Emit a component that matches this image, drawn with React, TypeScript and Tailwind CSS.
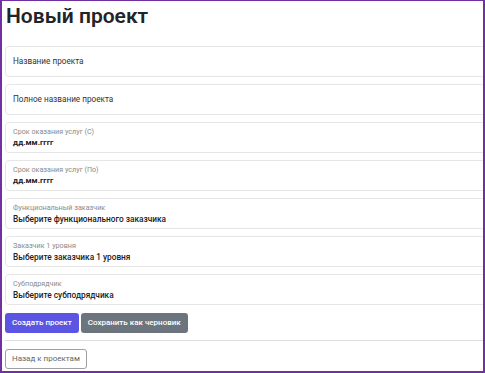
import React from "react";

type Field = {
  label?: string;
  value: string;
  bold?: boolean;
};

const fields: Field[] = [
  {value: "Название проекта"},
  {value: "Полное название проекта"},
  {label: "Срок оказания услуг (С)", value: "дд.мм.гггг", bold: true},
  {label: "Срок оказания услуг (По)", value: "дд.мм.гггг", bold: true},
  {label: "Функциональный заказчик", value: "Выберите функционального заказчика"},
  {label: "Заказчик 1 уровня", value: "Выберите заказчика 1 уровня"},
  {label: "Субподрядчик", value: "Выберите субподрядчика"},
];

const FieldCard: React.FC<{field: Field}> = ({field}) => {
  if (!field.label) {
    return <div className="h-[31px] flex items-center border border-[#e6e6e6] rounded-[4px] pl-[7px] bg-white">
      <span className="text-[8.2px] text-[#333]">{field.value}</span>
    </div>
  }
  return <div className="h-[31px] flex flex-col justify-center border border-[#e6e6e6] rounded-[4px] pl-[7px] bg-white">
    <span className="text-[7.2px] leading-[10px] text-[#8a8a8a]">{field.label}</span>
    <span className={(field.bold ? "text-[8px] font-bold text-[#222]" : "text-[8.3px] font-medium text-[#222]") + " leading-[12px]"}>
      {field.value}
    </span>
  </div>
}

export default function App() {
  return <div
    className="w-[485px] h-[373px] overflow-hidden bg-white border-t border-l-2 border-r-2 border-b-2 border-[#7030a0]"
    style={{fontFamily: 'Roboto, "Noto Sans", sans-serif'}}
  >
    <div className="pl-[3px] -mr-4">
      <h1 className="text-[21px] leading-[28px] font-semibold text-[#212529] pl-[1px] mt-[1px] mb-[16px]">Новый проект</h1>
      <div className="flex flex-col gap-[7px]">
        {fields.map(f => <FieldCard key={f.value + (f.label || "")} field={f}/>)}
      </div>
      <div className="flex gap-[2px] mt-[8px]">
        <button
          type="button"
          className="h-[20px] px-[7px] rounded-[3px] bg-[#5a55e3] text-white text-[8px] font-medium"
        >Создать проект
        </button>
        <button
          type="button"
          className="h-[20px] px-[7px] rounded-[3px] bg-[#6c757d] text-white text-[8px] font-medium"
        >Сохранить как черновик
        </button>
      </div>
      <div className="border-t border-[#dedede] mt-[7px]"/>
      <button
        type="button"
        className="mt-[8px] h-[20px] px-[6px] rounded-[3px] border border-[#a0a0a0] bg-white text-[#666] text-[8px]"
      >Назад к проектам
      </button>
    </div>
  </div>
}
